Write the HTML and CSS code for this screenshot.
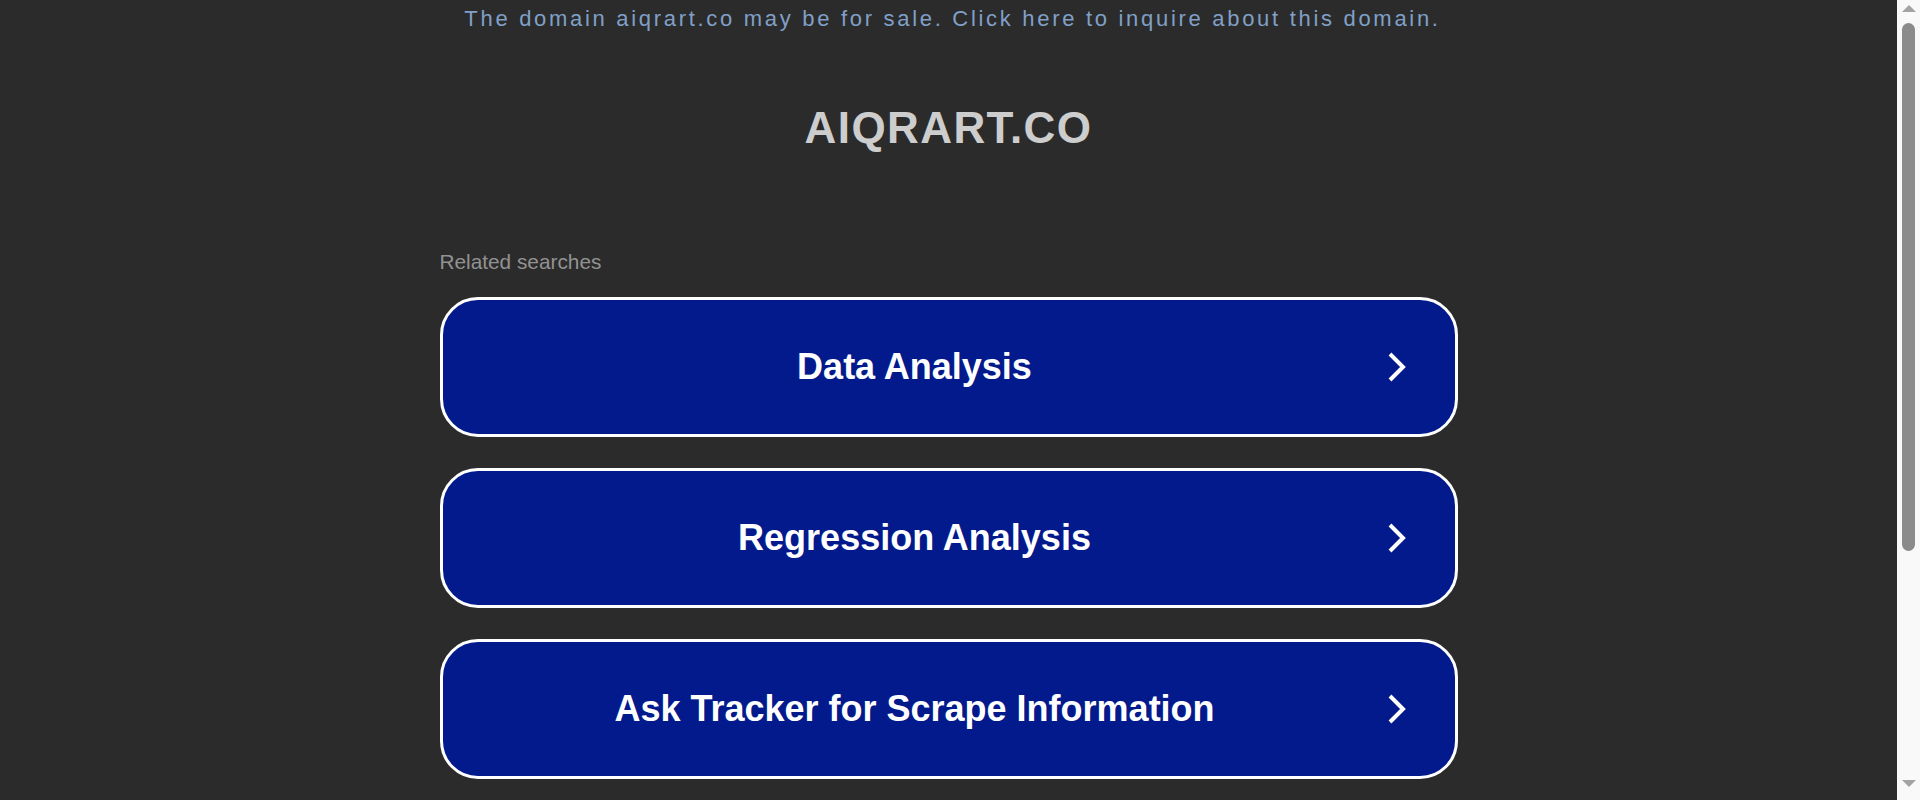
FILE: index.html
```html
<!DOCTYPE html>
<html>
<head>
  <meta charset="utf-8">
  <title>aiqrart.co</title>
  <link rel="stylesheet" href="styles.css">
</head>
<body>
  <div class="sale-banner">
    <a href="#">The domain aiqrart.co may be for sale. Click here to inquire about this domain.</a>
  </div>

  <div class="domain-title">
    <h1>AIQRART.CO</h1>
  </div>

  <div class="container">
    <div class="related-label">Related searches</div>

    <div class="links">
      <a class="link-btn" href="#">
        <span class="link-text">Data Analysis</span>
        <svg class="chevron" viewBox="0 0 20 32"><path d="M3 3 L16 16 L3 29"/></svg>
      </a>
      <a class="link-btn" href="#">
        <span class="link-text">Regression Analysis</span>
        <svg class="chevron" viewBox="0 0 20 32"><path d="M3 3 L16 16 L3 29"/></svg>
      </a>
      <a class="link-btn" href="#">
        <span class="link-text">Ask Tracker for Scrape Information</span>
        <svg class="chevron" viewBox="0 0 20 32"><path d="M3 3 L16 16 L3 29"/></svg>
      </a>
    </div>
  </div>

  <!-- page scrollbar as it shows in the screenshot -->
  <div class="scrollbar">
    <div class="arrow-up"></div>
    <div class="thumb"></div>
    <div class="track-rest"></div>
    <div class="arrow-down"></div>
  </div>
</body>
</html>
```

FILE: styles.css
```css
html, body {
  height: 100%;
}

body {
  margin: 0 23px 0 0;
  background-color: #2b2b2b;
  font-family: "Liberation Sans", Arial, sans-serif;
  overflow: hidden;
}

a {
  text-decoration: none;
}

.sale-banner {
  text-align: center;
  padding: 1px 0 0 8px;
  line-height: 36px;
  font-size: 22px;
  letter-spacing: 2.7px;
}

.sale-banner a {
  color: #80a0c8;
}

.domain-title {
  margin-top: 65px;
  text-align: center;
}

.domain-title h1 {
  margin: 0;
  font-size: 44px;
  line-height: 1.2;
  font-weight: bold;
  letter-spacing: 1.4px;
  color: #cdcdcd;
}

.container {
  width: 1018px;
  margin: 95px auto 0 auto;
}

.related-label {
  font-size: 20.8px;
  line-height: 1.2;
  color: #929292;
  margin-bottom: 22px;
}

.links {
  display: flex;
  flex-direction: column;
  gap: 31px;
}

.link-btn {
  display: flex;
  align-items: center;
  height: 134px;
  border: 3px solid #ffffff;
  border-radius: 38px;
  background-color: #021a8b;
  color: #ffffff;
}

.link-text {
  flex: 1;
  text-align: center;
  font-size: 36px;
  font-weight: bold;
}

.chevron {
  width: 20px;
  height: 32px;
  margin-right: 48px;
  fill: none;
  stroke: #ffffff;
  stroke-width: 4;
}

.scrollbar {
  position: fixed;
  top: 0;
  right: 0;
  bottom: 0;
  width: 23px;
  background-color: #f9f9f9;
  display: flex;
  flex-direction: column;
  align-items: center;
}

.arrow-up {
  margin-top: 5px;
  width: 0;
  height: 0;
  border-left: 7px solid transparent;
  border-right: 7px solid transparent;
  border-bottom: 7px solid #a3a3a3;
}

.thumb {
  margin-top: 11px;
  width: 13px;
  height: 528px;
  border-radius: 7px;
  background-color: #8b8b8b;
}

.track-rest {
  flex: 1;
}

.arrow-down {
  margin-bottom: 13px;
  width: 0;
  height: 0;
  border-left: 7px solid transparent;
  border-right: 7px solid transparent;
  border-top: 7px solid #a3a3a3;
}
```
